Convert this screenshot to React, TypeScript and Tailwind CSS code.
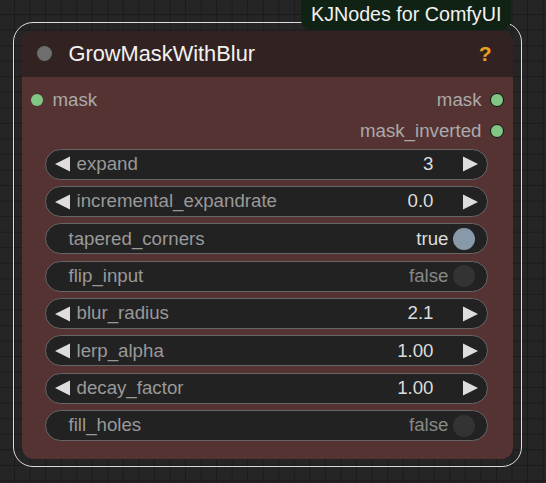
import React from "react";

type W =
  | { kind: "num"; label: string; value: string }
  | { kind: "toggle"; label: string; value: boolean };

const widgets: W[] = [
  { kind: "num", label: "expand", value: "3" },
  { kind: "num", label: "incremental_expandrate", value: "0.0" },
  { kind: "toggle", label: "tapered_corners", value: true },
  { kind: "toggle", label: "flip_input", value: false },
  { kind: "num", label: "blur_radius", value: "2.1" },
  { kind: "num", label: "lerp_alpha", value: "1.00" },
  { kind: "num", label: "decay_factor", value: "1.00" },
  { kind: "toggle", label: "fill_holes", value: false },
];

function LeftArrow() {
  return (
    <svg width="15" height="16" viewBox="0 0 15 16" className="shrink-0">
      <polygon points="15,0.5 0,8 15,15.5" fill="#dddddd" />
    </svg>
  );
}

function RightArrow() {
  return (
    <svg width="15" height="16" viewBox="0 0 15 16" className="shrink-0">
      <polygon points="0,0.5 15,8 0,15.5" fill="#dddddd" />
    </svg>
  );
}

function Widget({ w }: { w: W }) {
  if (w.kind === "num") {
    return (
      <div className="flex h-[31px] items-center rounded-full border border-[#666666] bg-[#222222] pl-[9px] pr-[9px]">
        <LeftArrow />
        <span className="ml-[7px] text-[#999999]">{w.label}</span>
        <span className="flex-1" />
        <span className="text-[#dddddd]">{w.value}</span>
        <span className="ml-[29px] flex">
          <RightArrow />
        </span>
      </div>
    );
  }
  return (
    <div className="flex h-[31px] items-center rounded-full border border-[#666666] bg-[#222222] pl-[23px] pr-[12px]">
      <span className="text-[#999999]">{w.label}</span>
      <span className="flex-1" />
      <span className={w.value ? "text-[#dddddd]" : "text-[#888888]"}>
        {w.value ? "true" : "false"}
      </span>
      <span
        className={
          "ml-[4px] h-[22px] w-[22px] rounded-full " +
          (w.value ? "bg-[#8899aa]" : "bg-[#333333]")
        }
      />
    </div>
  );
}

export default function App() {
  return (
    <div
      className="relative h-[483px] w-[546px] overflow-hidden bg-[#252525] bg-[linear-gradient(to_right,#1b1b1b_1px,transparent_1px),linear-gradient(to_bottom,#1b1b1b_1px,transparent_1px)] bg-[size:15.56px_15.56px] bg-[position:14px_14px] pt-[22px] pl-[13px]"
      style={{ fontFamily: '"Liberation Sans", Arial, sans-serif' }}
    >
      <div className="w-[509px] rounded-[20px] border-[1.5px] border-[#dddddd] p-[7.5px]">
        <div className="flex h-[428px] w-[491px] flex-col overflow-hidden rounded-[12px] bg-[#553333] text-[18.7px] leading-none">
          {/* title */}
          <div className="flex h-[46.7px] shrink-0 items-center bg-[#332222] pl-[15.5px] pr-[21px]">
            <span className="h-[15px] w-[15px] rounded-full bg-[#6e6e6e]" />
            <span className="ml-[16.5px] text-[21.8px] text-[#f2f2f2]">GrowMaskWithBlur</span>
            <span className="flex-1" />
            <span className="text-[21px] font-bold text-[#e8a020]">?</span>
          </div>
          {/* slots */}
          <div className="flex flex-col pt-[7.5px]">
            <div className="flex h-[31px] items-center pl-[9px] pr-[9px]">
              <span className="h-[12px] w-[12px] rounded-full bg-[#81c784]" />
              <span className="ml-[10px] text-[#aaaaaa]">mask</span>
              <span className="flex-1" />
              <span className="text-[#aaaaaa]">mask</span>
              <span className="ml-[8px] h-[14px] w-[14px] rounded-full border-[1.5px] border-[#111111] bg-[#81c784]" />
            </div>
            <div className="flex h-[31px] items-center justify-end pr-[9px]">
              <span className="text-[#aaaaaa]">mask_inverted</span>
              <span className="ml-[8px] h-[14px] w-[14px] rounded-full border-[1.5px] border-[#111111] bg-[#81c784]" />
            </div>
          </div>
          {/* widgets */}
          <div className="mt-[2.1px] flex flex-col gap-[6.33px] pl-[23px] pr-[25px]">
            {widgets.map((w) => (
              <Widget key={w.label} w={w} />
            ))}
          </div>
        </div>
      </div>
      {/* badge */}
      <div className="absolute left-[301px] top-[-10px] flex h-[40px] items-end rounded-[10px] bg-[#102214] px-[10px] pb-[5px] text-[19.7px] leading-none text-[#f2f2f2]">
        KJNodes for ComfyUI
      </div>
    </div>
  );
}
